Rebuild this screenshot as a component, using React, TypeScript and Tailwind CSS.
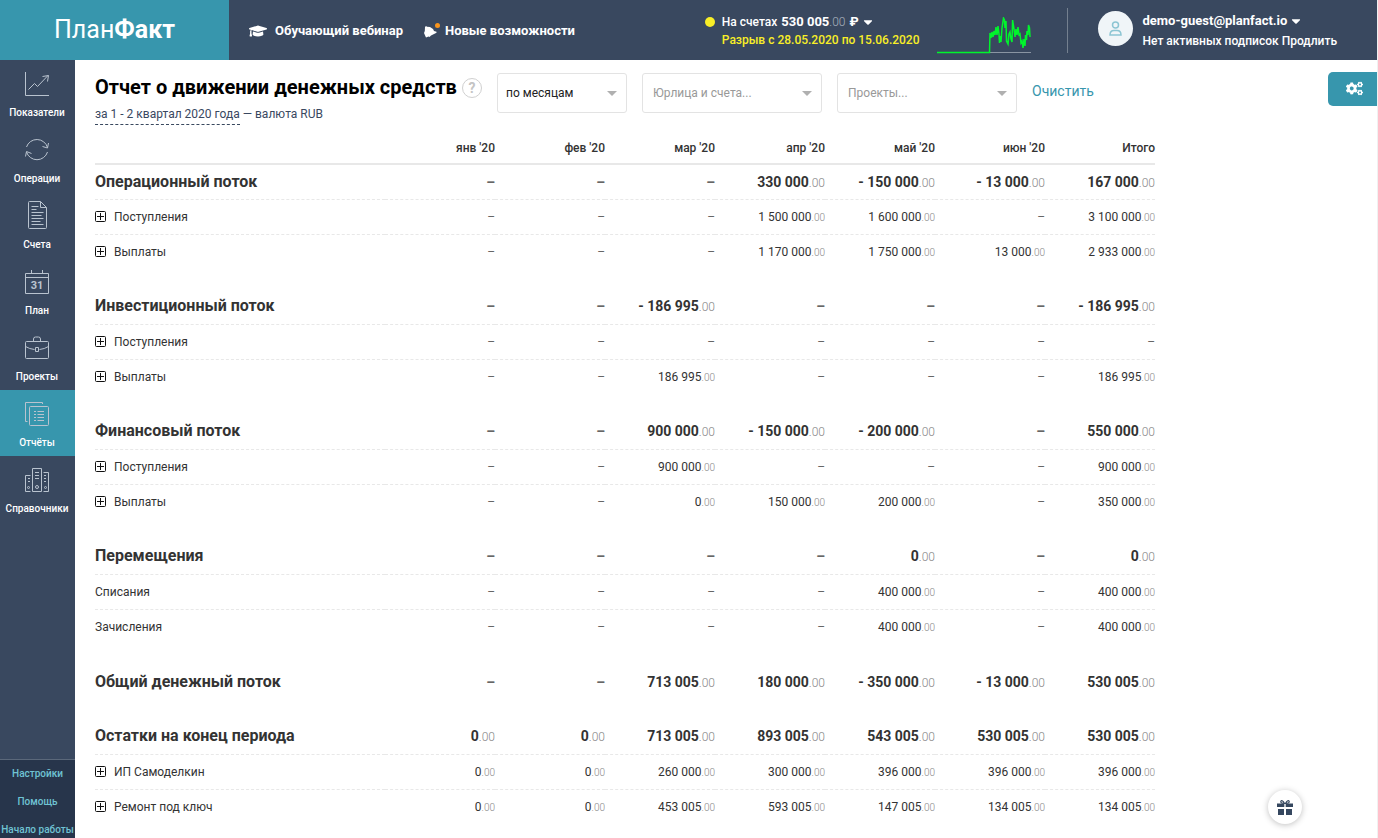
import type { ReactNode } from 'react';
import { FaCaretDown, FaCogs, FaGraduationCap } from 'react-icons/fa';

type Row = { title: string; values: string[]; expandable?: boolean };
type Group = { title: string; values: string[]; rows: Row[] };

const months = ["янв '20", "фев '20", "мар '20", "апр '20", "май '20", "июн '20", 'Итого'];

const groups: Group[] = [
  {
    title: 'Операционный поток',
    values: ['', '', '', '330 000', '- 150 000', '- 13 000', '167 000'],
    rows: [
      { title: 'Поступления', values: ['', '', '', '1 500 000', '1 600 000', '', '3 100 000'], expandable: true },
      { title: 'Выплаты', values: ['', '', '', '1 170 000', '1 750 000', '13 000', '2 933 000'], expandable: true },
    ],
  },
  {
    title: 'Инвестиционный поток',
    values: ['', '', '- 186 995', '', '', '', '- 186 995'],
    rows: [
      { title: 'Поступления', values: ['', '', '', '', '', '', ''], expandable: true },
      { title: 'Выплаты', values: ['', '', '186 995', '', '', '', '186 995'], expandable: true },
    ],
  },
  {
    title: 'Финансовый поток',
    values: ['', '', '900 000', '- 150 000', '- 200 000', '', '550 000'],
    rows: [
      { title: 'Поступления', values: ['', '', '900 000', '', '', '', '900 000'], expandable: true },
      { title: 'Выплаты', values: ['', '', '0', '150 000', '200 000', '', '350 000'], expandable: true },
    ],
  },
  {
    title: 'Перемещения',
    values: ['', '', '', '', '0', '', '0'],
    rows: [
      { title: 'Списания', values: ['', '', '', '', '400 000', '', '400 000'] },
      { title: 'Зачисления', values: ['', '', '', '', '400 000', '', '400 000'] },
    ],
  },
  {
    title: 'Общий денежный поток',
    values: ['', '', '713 005', '180 000', '- 350 000', '- 13 000', '530 005'],
    rows: [],
  },
  {
    title: 'Остатки на конец периода',
    values: ['0', '0', '713 005', '893 005', '543 005', '530 005', '530 005'],
    rows: [
      { title: 'ИП Самоделкин', values: ['0', '0', '260 000', '300 000', '396 000', '396 000', '396 000'], expandable: true },
      { title: 'Ремонт под ключ', values: ['0', '0', '453 005', '593 005', '147 005', '134 005', '134 005'], expandable: true },
    ],
  },
];

function NavIcon({ children }: { children: ReactNode }) {
  return (
    <svg viewBox="0 0 24 24" className="h-6 w-6 overflow-visible" fill="none" stroke="#b9c3cf" strokeWidth="1" aria-hidden="true">
      {children}
    </svg>
  );
}

const navItems = [
  {
    label: 'Показатели',
    icon: (
      <NavIcon>
        <path d="M.5 0v23.5H24M3.5 17.5l6-6 3 3L23 3.5M17.5 4.5l6-1-1 6" />
      </NavIcon>
    ),
  },
  {
    label: 'Операции',
    icon: (
      <NavIcon>
        <path d="M1.5 9A11 11 0 0 1 22.5 9.5M22.5 14A11 11 0 0 1 1.5 14M17.5 8.5l5 1.5 1-5M6.5 15.5l-5-2-1 5" />
      </NavIcon>
    ),
  },
  {
    label: 'Счета',
    icon: (
      <NavIcon>
        <path d="M4.5-2.5h11l6 6v20a1 1 0 0 1-1 1h-16a1 1 0 0 1-1-1v-25a1 1 0 0 1 1-1zM15.5-2.5v6h6M6.5 2.5h7M6.5 5.5h5M6.5 8.5h12M6.5 11.5h10M6.5 14.5h12M6.5 17.5h9M6.5 20.5h12" />
      </NavIcon>
    ),
  },
  {
    label: 'План',
    icon: (
      <NavIcon>
        <path d="M.5 3.5h23v20H.5zM.5 7.5h23M6.5 0v3.5M17.5 0v3.5" />
        <text x="12" y="19" textAnchor="middle" fontSize="11" fontWeight="700" fill="#b9c3cf" stroke="none">
          31
        </text>
      </NavIcon>
    ),
  },
  {
    label: 'Проекты',
    icon: (
      <NavIcon>
        <rect x=".5" y="5.5" width="23" height="17" rx="1" />
        <path d="M8.5 5.5V3a2 2 0 0 1 2-2h3a2 2 0 0 1 2 2v2.5M.5 10.5q4 2.5 9 3M23.5 10.5q-4 2.5-9 3M10.5 11.5h3v4h-3z" />
      </NavIcon>
    ),
  },
  {
    label: 'Отчёты',
    active: true,
    icon: (
      <NavIcon>
        <rect x="4.5" y="4.5" width="19" height="19" rx="1" />
        <path d="M2.5 19.5H.5V.5h17v1.5M9 9.5h2M9 12.5h2M9 15.5h2M9 18.5h2M12.5 9.5H19M12.5 12.5H19M12.5 15.5H19M12.5 18.5H19" />
      </NavIcon>
    ),
  },
  {
    label: 'Справочники',
    icon: (
      <NavIcon>
        <path d="M7.5 23.5v-23h9v23zM5.5 7.5h-5v16h5M18.5 4.5h5v19h-5M10 4.5h4M10 7.5h4M10 10.5h4M3 10.5h2M3 13.5h2M19 7.5h2M19 10.5h2M19 13.5h2" />
        <circle cx="12" cy="19" r="1.5" />
        <circle cx="3.5" cy="19.5" r="1" />
        <circle cx="20.5" cy="19.5" r="1" />
      </NavIcon>
    ),
  },
];

function BellIcon() {
  return (
    <svg viewBox="0 0 18 16" className="h-4 w-[18px]" aria-hidden="true">
      <path d="M2 4 3 3l1 .7 3 .3 3 2 1 2 2.500.8v1L11 11l-3 1.500-1.500 1.500-1-.5L3 14.500l-.7-1.500L1 10l.8-2z" fill="#fff" />
      <circle cx="14.5" cy="2.5" r="2.5" fill="#f7941d" />
    </svg>
  );
}

function Sparkline() {
  return (
    <svg viewBox="0 0 94 38" className="h-[38px] w-[94px]" fill="none" aria-hidden="true">
      <path d="M53 35.5h41" stroke="#8a95a3" />
      <path
        d="M0 35.5H52.5L53 16 54 21 55 15 56 20 57 14 58 18 59 10 60 18 61 9 62 17 62.5 26 63.5 19 64 25 65 11 66.5 1 67.5 3 68 11 69 4 69.5 24 71 27 72 17 73 15 74 22 75 25 75.6 3 77 12 78 20 79 12 80 18 81 10 82 18 83 17 84 26 85 24 86 31 87 22 88 29 88.5 18 89.5 23 90 14 91 18 91.5 8 92.5 11 93 20"
        stroke="#00f52c"
        strokeWidth="1.5"
      />
    </svg>
  );
}

function GiftIcon() {
  return (
    <svg viewBox="0 0 16 15" className="h-[15px] w-4" fill="#35475f" aria-hidden="true">
      <path d="M0 3.5h7.3V7H0zM8.7 3.5H16V7H8.7zM1 9h6v6H1zM9 9h6v6H9z" />
      <path d="M7.5 3.5C6 .5 4 0 3.8 1.5s1.7 2 3.7 2zM8.5 3.5C10 .5 12 0 12.2 1.5s-1.7 2-3.7 2z" fill="none" stroke="#35475f" strokeWidth="1.2" />
    </svg>
  );
}

function FilterSelect({ label, className, children }: { label: string; className: string; children: ReactNode }) {
  return (
    <div className="relative h-10">
      <select
        aria-label={label}
        className={`h-full appearance-none rounded-[3px] border border-[#e3e3e3] bg-white text-xs outline-none ${className}`}
      >
        {children}
      </select>
      <span className="pointer-events-none absolute top-[18px] right-[10px] border-x-5 border-t-5 border-x-transparent border-t-[#b0b0b0]" />
    </div>
  );
}

function Amount({ value, bold }: { value: string; bold?: boolean }) {
  if (!value) {
    return <span className="text-[#666]">–</span>;
  }
  return (
    <>
      {value}
      <span className={bold ? 'text-xs font-light text-[#888]' : 'text-[10px] font-light text-[#888]'}>.00</span>
    </>
  );
}

function GroupRows({ group, first }: { group: Group; first: boolean }) {
  const border = 'border-b border-dashed border-[#e8e8e8]';
  return (
    <tbody className="text-[#333]">
      {!first && (
        <tr className="h-5">
          <td colSpan={8} />
        </tr>
      )}
      <tr className={`h-[35px] text-sm font-bold ${group.rows.length ? border : ''}`}>
        <th scope="row" className="text-left text-base font-bold">
          {group.title}
        </th>
        {group.values.map((value, i) => (
          <td key={i} className="text-right">
            <Amount value={value} bold />
          </td>
        ))}
      </tr>
      {group.rows.map((row, i) => (
        <tr key={row.title} className={`h-[35px] text-xs ${i < group.rows.length - 1 ? border : ''}`}>
          <th scope="row" className="text-left font-normal">
            <div className="flex items-center gap-2">
              {row.expandable && (
                <button type="button" aria-label={`Развернуть ${row.title}`} className="h-[11px] w-[11px]">
                  <svg viewBox="0 0 11 11" className="h-[11px] w-[11px]" fill="none" stroke="#111">
                    <rect x=".5" y=".5" width="10" height="10" rx="1" />
                    <path d="M5.5 2v7M2 5.5h7" />
                  </svg>
                </button>
              )}
              {row.title}
            </div>
          </th>
          {row.values.map((value, j) => (
            <td key={j} className="text-right">
              <Amount value={value} />
            </td>
          ))}
        </tr>
      ))}
    </tbody>
  );
}

function Header() {
  return (
    <header className="flex h-[60px] items-center bg-[#39485f] text-white">
      <a href="#" className="flex h-full w-[229px] shrink-0 items-center justify-center bg-[#3796ad] text-[25px]">
        План<b>Факт</b>
      </a>
      <nav className="flex flex-1 items-center gap-5 pt-px pl-5 text-[13px] font-bold">
        <a href="#" className="flex items-center gap-2">
          <FaGraduationCap size={18} />
          Обучающий вебинар
        </a>
        <a href="#" className="flex items-center gap-1">
          <BellIcon />
          Новые возможности
        </a>
      </nav>
      <div className="flex h-full items-center">
        <div className="flex gap-[7px] pt-0.5 text-xs leading-[18px] font-medium">
          <span className="mt-1 h-[10px] w-[10px] rounded-full bg-[#f8ee27]" />
          <div>
            <button type="button" className="flex items-center">
              На счетах
              <b className="ml-1 text-[13px]">530 005</b>
              <span className="text-xs font-light text-[#a8b1bd]">.00</span>
              <b className="ml-1 text-[13px]">₽</b>
              <FaCaretDown size={14} className="ml-0.5" />
            </button>
            <div className="text-[#f8ee27]">Разрыв с 28.05.2020 по 15.06.2020</div>
          </div>
        </div>
        <div className="ml-[17px] pt-3">
          <Sparkline />
        </div>
        <div className="ml-9 h-[45px] w-px bg-[#74808f]" />
        <div className="mb-1 ml-[30px] grid h-[35px] w-[35px] place-items-center rounded-full bg-[#f0f5f8]">
          <svg viewBox="0 0 13 15" className="h-[15px] w-[13px]" fill="none" stroke="#8cc5d3" strokeWidth="1.5" aria-hidden="true">
            <circle cx="6.5" cy="4" r="3" />
            <path d="M1 14c0-3 1.5-4.5 4-4.5h3c2.500 0 4 1.500 4 4.500z" />
          </svg>
        </div>
        <div className="mr-10 ml-[10px] pt-0.5 text-xs leading-5 font-medium">
          <button type="button" className="flex items-center gap-0.5 text-[13px] font-bold">
            demo-guest@planfact.io
            <FaCaretDown size={14} />
          </button>
          <div>
            Нет активных подписок <a href="#">Продлить</a>
          </div>
        </div>
      </div>
    </header>
  );
}

function Sidebar() {
  return (
    <aside className="flex w-[75px] shrink-0 flex-col justify-between bg-[#39485f] text-center text-[10px] font-medium text-white">
      <nav>
        {navItems.map(({ label, icon, active }) => (
          <a key={label} href="#" className={`flex h-[66px] flex-col items-center gap-[9px] pt-3 pr-px leading-4 ${active ? 'bg-[#3796ad]' : ''}`}>
            {icon}
            {label}
          </a>
        ))}
      </nav>
      <nav className="flex flex-col gap-2 border-t border-[#5b687a] bg-[#27354b] pt-1 leading-5 whitespace-nowrap text-[#6fc3d3]">
        <a href="#">Настройки</a>
        <a href="#">Помощь</a>
        <a href="#" className="h-[18px]">
          Начало работы
        </a>
      </nav>
    </aside>
  );
}

export default function App() {
  return (
    <div className="flex min-h-screen flex-col border-r border-[#f1f1f1] bg-white font-['Roboto',sans-serif]">
      <Header />
      <div className="flex flex-1">
        <Sidebar />
        <main className="min-w-0 flex-1 pl-5">
          <div className="flex items-start pt-3">
            <div className="w-[402px] shrink-0">
              <div className="flex items-center gap-[5px]">
                <h1 className="text-xl leading-[31px] font-bold whitespace-nowrap text-black">Отчет о движении денежных средств</h1>
                <button type="button" aria-label="Справка" className="h-5 w-5 rounded-full border border-[#d0d0d0] text-sm leading-[18px] font-bold text-[#c4c4c4]">
                  ?
                </button>
              </div>
              <div className="pt-px text-xs leading-5 text-[#39485f]">
                <a href="#" className="inline-block border-b border-dashed border-[#39485f] leading-[19px]">
                  за 1 - 2 квартал 2020 года
                </a>{' '}
                — валюта RUB
              </div>
            </div>
            <div className="mt-px flex flex-1 items-center gap-[15px]">
              <FilterSelect label="Период" className="w-[130px] px-2 text-[#222]">
                <option>по месяцам</option>
              </FilterSelect>
              <FilterSelect label="Юрлица и счета" className="w-[180px] px-2.5 text-[#999]">
                <option>Юрлица и счета...</option>
              </FilterSelect>
              <FilterSelect label="Проекты" className="w-[180px] px-2.5 text-[#999]">
                <option>Проекты...</option>
              </FilterSelect>
              <button type="button" className="pb-1 text-sm text-[#3796ad]">
                Очистить
              </button>
            </div>
            <button type="button" aria-label="Настройки отчета" className="grid h-[34px] w-[49px] place-items-center rounded-l-[5px] bg-[#3796ad] pb-0.5 pl-1 text-white">
              <FaCogs size={17} />
            </button>
          </div>
          <table className="mt-2 w-[1060px] table-fixed border-collapse">
            <thead className="text-xs font-medium text-[#333]">
              <tr className="h-[31px] border-b-2 border-[#e8e8e8]">
                <td className="w-[290px]" />
                {months.map((month) => (
                  <th key={month} scope="col" className="text-right font-medium">
                    {month}
                  </th>
                ))}
              </tr>
            </thead>
            {groups.map((group, i) => (
              <GroupRows key={group.title} group={group} first={i === 0} />
            ))}
          </table>
        </main>
      </div>
      <button type="button" aria-label="Подарки" className="fixed right-[76px] bottom-[14px] grid h-[34px] w-[34px] place-items-center rounded-full bg-white shadow-[0_1px_6px_rgba(0,0,0,0.25)]">
        <GiftIcon />
      </button>
    </div>
  );
}
